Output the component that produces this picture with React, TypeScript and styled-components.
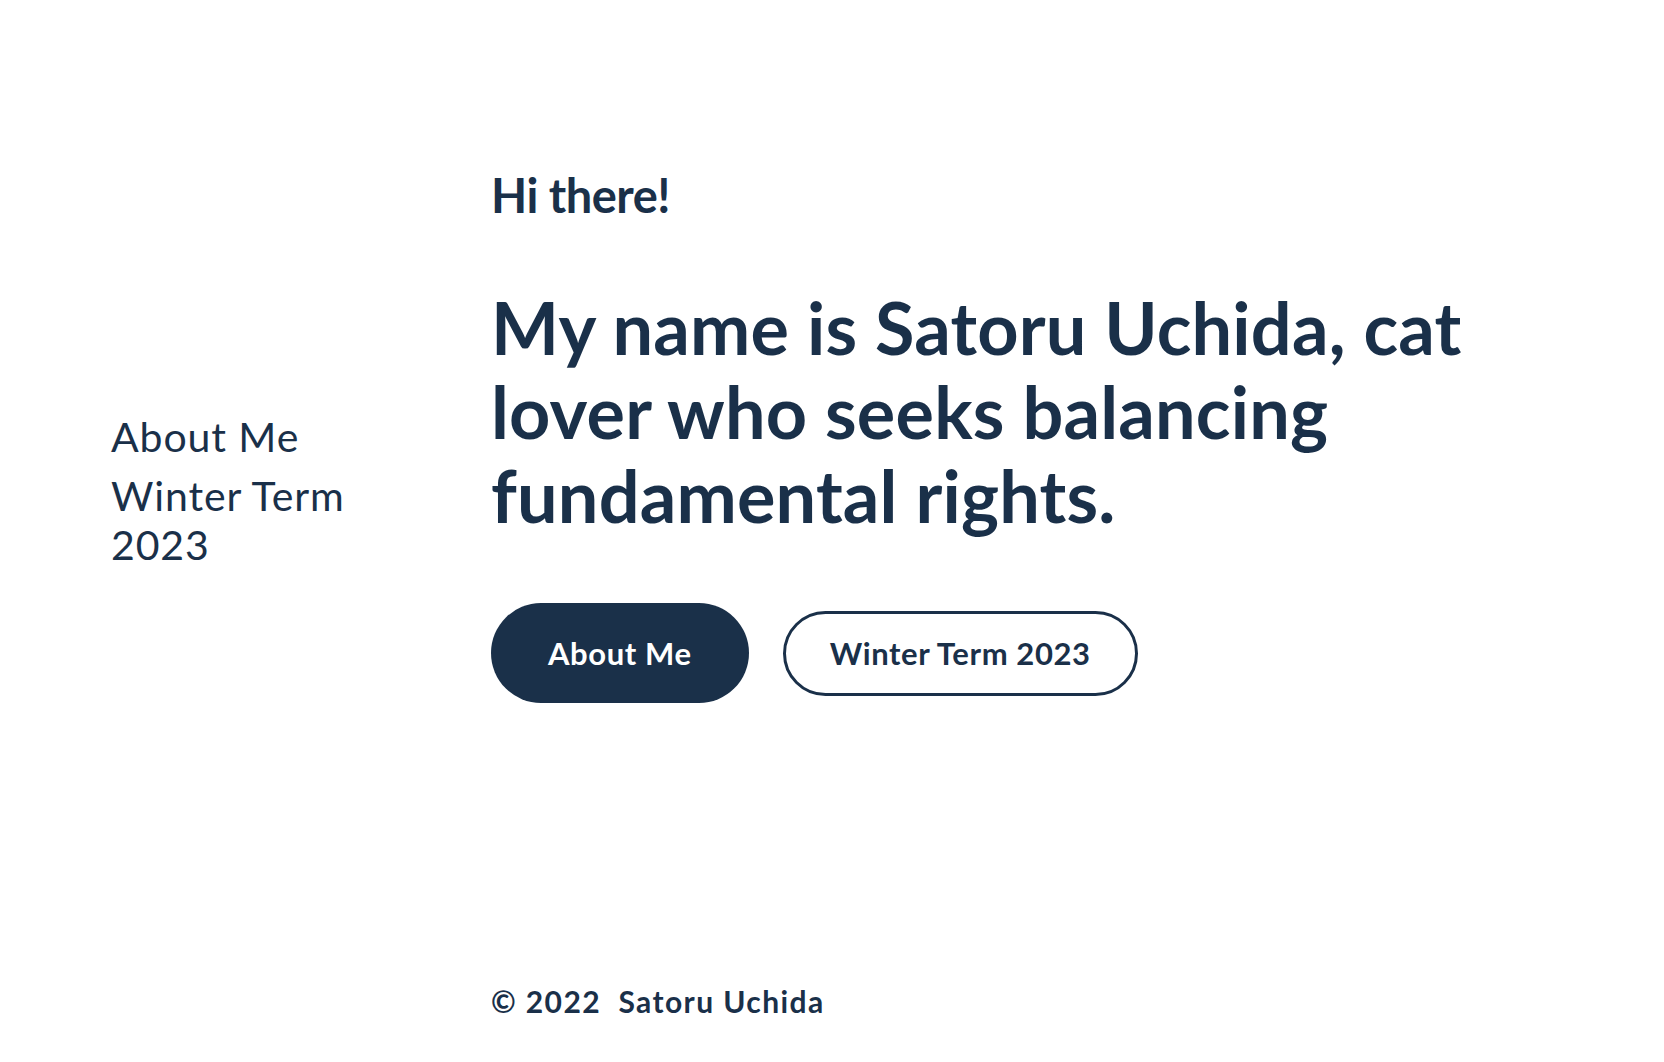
import React from "react";
import styled, { createGlobalStyle } from "styled-components";

const NAVY = "#1a3049";

const GlobalStyle = createGlobalStyle`
  html, body {
    margin: 0;
    padding: 0;
    background: #ffffff;
  }
  body {
    font-family: Lato, "Open Sans", "Liberation Sans", sans-serif;
    color: ${NAVY};
  }
  * { box-sizing: border-box; }
`;

const Layout = styled.div`
  display: flex;
  min-height: 100vh;
`;

const SideNav = styled.nav`
  width: 491px;
  flex-shrink: 0;
  padding: 412px 0 0 111px;
`;

const NavList = styled.ul`
  list-style: none;
  margin: 0;
  padding: 0;
  display: flex;
  flex-direction: column;
  gap: 10px;
`;

const NavLink = styled.a`
  display: block;
  font-size: 41px;
  line-height: 49px;
  font-weight: 400;
  letter-spacing: 0.9px;
  color: ${NAVY};
  text-decoration: none;
  max-width: 260px;
`;

const Main = styled.main`
  flex: 1;
  display: flex;
  flex-direction: column;
  padding: 167px 0 43px 0;
`;

const Greeting = styled.h2`
  margin: 0;
  font-size: 47px;
  line-height: 56px;
  font-weight: 700;
  letter-spacing: -0.5px;
`;

const Headline = styled.h1`
  margin: 62px 0 0 0;
  max-width: 1040px;
  font-size: 72px;
  line-height: 84px;
  font-weight: 700;
  letter-spacing: 0.2px;
`;

const Actions = styled.div`
  display: flex;
  align-items: center;
  gap: 34px;
  margin-top: 66px;
`;

const PillButton = styled.a<{ $filled?: boolean }>`
  display: inline-flex;
  align-items: center;
  justify-content: center;
  height: ${(p) => (p.$filled ? "100px" : "85px")};
  padding: 0 ${(p) => (p.$filled ? "57px" : "44px")};
  border-radius: 999px;
  border: ${(p) => (p.$filled ? "none" : `3px solid ${NAVY}`)};
  background: ${(p) => (p.$filled ? NAVY : "#ffffff")};
  color: ${(p) => (p.$filled ? "#ffffff" : NAVY)};
  font-size: 31px;
  line-height: 36px;
  font-weight: 700;
  letter-spacing: 0.6px;
  text-decoration: none;
  cursor: pointer;
`;

const Footer = styled.footer`
  margin-top: auto;
  font-size: 30px;
  line-height: 35px;
  font-weight: 700;
  letter-spacing: 1.4px;
  white-space: pre;
`;

export default function App() {
  return (
    <>
      <GlobalStyle />
      <Layout>
        <SideNav>
          <NavList>
            <li>
              <NavLink href="#about">About Me</NavLink>
            </li>
            <li>
              <NavLink href="#winter">Winter Term 2023</NavLink>
            </li>
          </NavList>
        </SideNav>
        <Main>
          <Greeting>Hi there!</Greeting>
          <Headline>
            My name is Satoru Uchida, cat lover who seeks balancing fundamental rights.
          </Headline>
          <Actions>
            <PillButton $filled href="#about">About Me</PillButton>
            <PillButton href="#winter">Winter Term 2023</PillButton>
          </Actions>
          <Footer>{"© 2022  Satoru Uchida"}</Footer>
        </Main>
      </Layout>
    </>
  );
}
